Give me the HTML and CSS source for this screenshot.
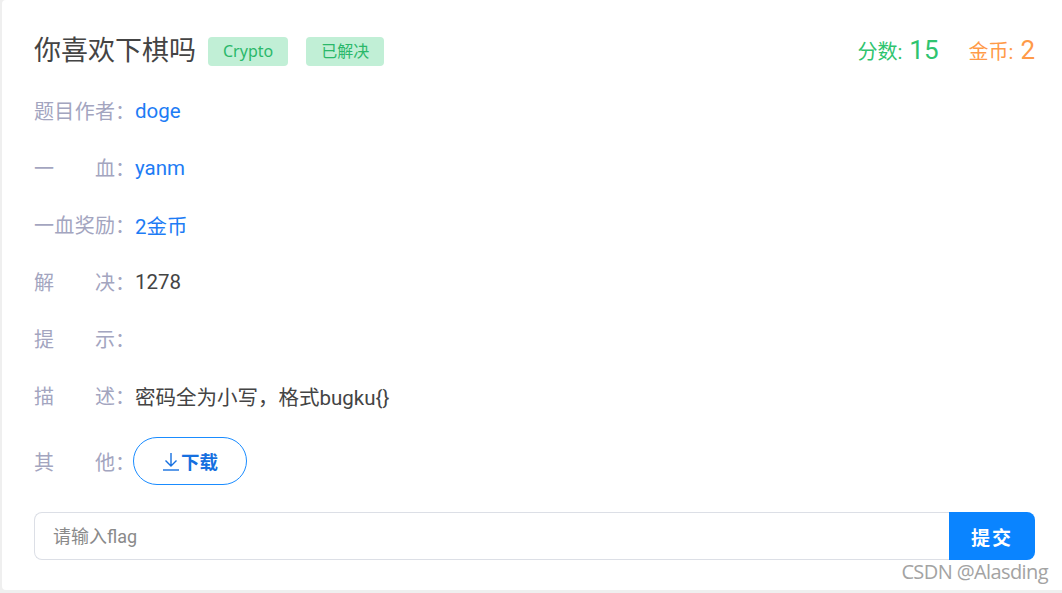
FILE: index.html
```html
<!DOCTYPE html>
<html lang="zh-CN">
<head>
    <meta charset="UTF-8">
    <title>你喜欢下棋吗</title>
    <link rel="stylesheet" href="styles.css">
</head>
<body>
    <div class="card">
        <div class="head">
            <h1 class="title">你喜欢下棋吗</h1>
            <span class="tag">Crypto</span>
            <span class="tag">已解决</span>
            <div class="stats">
                <span class="score">分数: <b>15</b></span>
                <span class="coin">金币: <b>2</b></span>
            </div>
        </div>

        <div class="row">
            <div class="label"><span class="lab">题目作者</span>：</div>
            <div class="value link">doge</div>
        </div>
        <div class="row">
            <div class="label"><span class="lab">一血</span>：</div>
            <div class="value link">yanm</div>
        </div>
        <div class="row">
            <div class="label"><span class="lab">一血奖励</span>：</div>
            <div class="value link">2金币</div>
        </div>
        <div class="row">
            <div class="label"><span class="lab">解决</span>：</div>
            <div class="value">1278</div>
        </div>
        <div class="row">
            <div class="label"><span class="lab">提示</span>：</div>
            <div class="value"></div>
        </div>
        <div class="row">
            <div class="label"><span class="lab">描述</span>：</div>
            <div class="value">密码全为小写，格式bugku{}</div>
        </div>
        <div class="row row-last">
            <div class="label"><span class="lab">其他</span>：</div>
            <button class="download">
                <svg width="18" height="20" viewBox="0 0 18 20" fill="none" stroke="currentColor" stroke-width="1.4">
                    <path d="M9 2v13M3.5 9.5L9 15l5.5-5.5"/>
                    <path d="M1 19h16"/>
                </svg>下载
            </button>
        </div>

        <div class="submit">
            <input type="text" placeholder="请输入flag">
            <button class="btn-submit">提交</button>
        </div>

        <span class="watermark">CSDN @Alasding</span>
    </div>
</body>
</html>
```

FILE: styles.css
```css
body {
    margin: 0;
    background-color: #efefef;
    font-family: Roboto, "Noto Sans CJK SC", sans-serif;
    height: 593px;
    overflow: hidden;
}
.card {
    position: relative;
    margin-left: 2px;
    height: 590px;
    box-sizing: border-box;
    background: #fff;
    border-radius: 4px 0 0 4px;
    padding: 28px 27px 0 32px;
}
.head {
    display: flex;
    align-items: center;
    height: 40px;
    margin-bottom: 14px;
}
.title {
    margin: 0 12px 0 0;
    font-size: 27px;
    font-weight: normal;
    color: #444;
}
.tag {
    height: 29px;
    line-height: 29px;
    margin-top: 7px;
    padding: 0 15px;
    margin-right: 18px;
    background-color: #c1efd6;
    color: #2ab86a;
    font-family: "Noto Sans", "Noto Sans CJK SC", sans-serif;
    font-size: 16px;
    border-radius: 4px;
}
.stats {
    margin-left: auto;
    display: flex;
    align-items: baseline;
    gap: 30px;
    margin-top: 4px;
    font-size: 20px;
}
.stats b {
    font-weight: normal;
    font-size: 26px;
    margin-left: 2px;
}
.score {
    color: #2fc46f;
}
.coin {
    color: #ff9a48;
}
.row {
    display: flex;
    align-items: center;
    height: 57px;
    font-size: 20px;
}
.label {
    width: 101px;
    color: #a3a5bf;
    display: flex;
}
.lab {
    width: 81px;
    text-align: justify;
    text-align-last: justify;
}
.value {
    color: #444;
    font-size: 20.5px;
}
.link {
    color: #1e7cf5;
}
.row-last {
    height: 48px;
    margin-top: 13px;
}
.download {
    display: flex;
    align-items: center;
    justify-content: center;
    width: 114px;
    height: 48px;
    margin-left: -2px;
    background: #fff;
    border: 1px solid #1a8cff;
    border-radius: 24px;
    color: #1670e0;
    font-family: Roboto, "Noto Sans CJK SC", sans-serif;
    font-size: 18.5px;
    font-weight: bold;
    cursor: pointer;
}
.download svg {
    margin-right: 1px;
}
.submit {
    display: flex;
    margin-top: 27px;
    height: 48px;
}
.submit input {
    flex: 1;
    box-sizing: border-box;
    height: 48px;
    border: 1px solid #dcdfe6;
    border-right: none;
    border-radius: 8px 0 0 8px;
    padding: 0 18px;
    font-family: Roboto, "Noto Sans CJK SC", sans-serif;
    font-size: 18px;
    outline: none;
}
.submit input::placeholder {
    color: #8a8a8a;
}
.btn-submit {
    width: 86px;
    height: 48px;
    border: none;
    border-radius: 0 8px 8px 0;
    background-color: #0a84ff;
    color: #fff;
    font-family: Roboto, "Noto Sans CJK SC", sans-serif;
    font-size: 19px;
    font-weight: bold;
    letter-spacing: 2px;
    cursor: pointer;
}
.watermark {
    position: absolute;
    right: 14px;
    bottom: 5px;
    font-family: "Open Sans", "Noto Sans", sans-serif;
    font-size: 20px;
    letter-spacing: -0.6px;
    color: #a3a3a3;
    text-shadow: 0 0 2px #fff;
}
```
